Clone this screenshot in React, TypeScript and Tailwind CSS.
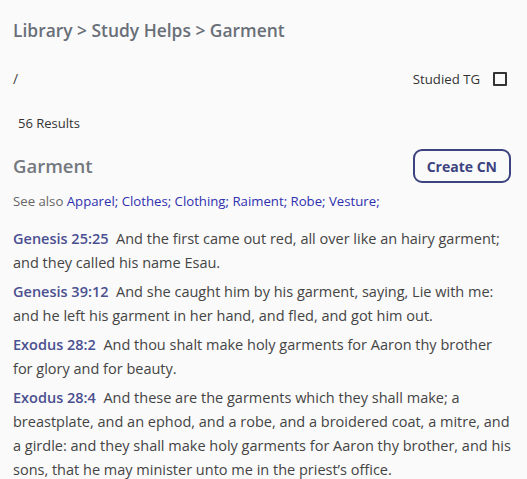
const seeAlso = ['Apparel', 'Clothes', 'Clothing', 'Raiment', 'Robe', 'Vesture'];

const verses = [
  {
    ref: 'Genesis 25:25',
    text: 'And the first came out red, all over like an hairy garment; and they called his name Esau.',
  },
  {
    ref: 'Genesis 39:12',
    text: 'And she caught him by his garment, saying, Lie with me: and he left his garment in her hand, and fled, and got him out.',
  },
  {
    ref: 'Exodus 28:2',
    text: 'And thou shalt make holy garments for Aaron thy brother for glory and for beauty.',
  },
  {
    ref: 'Exodus 28:4',
    text: 'And these are the garments which they shall make; a breastplate, and an ephod, and a robe, and a broidered coat, a mitre, and a girdle: and they shall make holy garments for Aaron thy brother, and his sons, that he may minister unto me in the priest\u2019s office.',
  },
];

const App = () => {
  return (
    <div
      className="h-[479px] w-[527px] overflow-hidden bg-[#fafafa] px-[13px] pt-[18px] text-[#444444]"
      style={{ fontFamily: '"Open Sans", sans-serif' }}
    >
      <h1 className="text-[17.4px] font-semibold leading-[24px] text-[#696f78]">
        Library &gt; Study Helps &gt; Garment
      </h1>

      <div className="mt-[25px] flex items-center justify-between pr-[7px]">
        <span className="text-[14px] leading-[24px]">/</span>
        <label className="flex items-center gap-[13px] text-[13.2px] leading-[24px] text-[#333]">
          Studied TG
          <span className="h-[14px] w-[14px] rounded-[1px] border-2 border-[#333]" />
        </label>
      </div>

      <div className="mt-[23px] pl-[5px] text-[13px] leading-[18px] text-[#333]">56 Results</div>

      <div className="mt-[17px] flex items-center justify-between pr-[3px]">
        <h2 className="text-[18.5px] font-semibold leading-[26px] text-[#73787e]">Garment</h2>
        <button className="h-[34px] rounded-[9px] border-2 border-[#3c437f] px-[12px] text-[14px] font-bold text-[#3c437f]">
          Create CN
        </button>
      </div>

      <p className="mt-[9px] text-[13.2px] leading-[18px] text-[#666]">
        See also{' '}
        {seeAlso.map((s) => (
          <span key={s} className="text-[#2f2fb0]">
            {s};{' '}
          </span>
        ))}
      </p>

      <div className="mt-[17px] flex flex-col gap-[5px]">
        {verses.map((v) => (
          <p key={v.ref} className="text-[14.5px] leading-[24px]">
            <span className="font-semibold text-[#4b5090]">{v.ref}</span>
            {'\u00a0 '}
            {v.text}
          </p>
        ))}
      </div>
    </div>
  );
};

export default App;
